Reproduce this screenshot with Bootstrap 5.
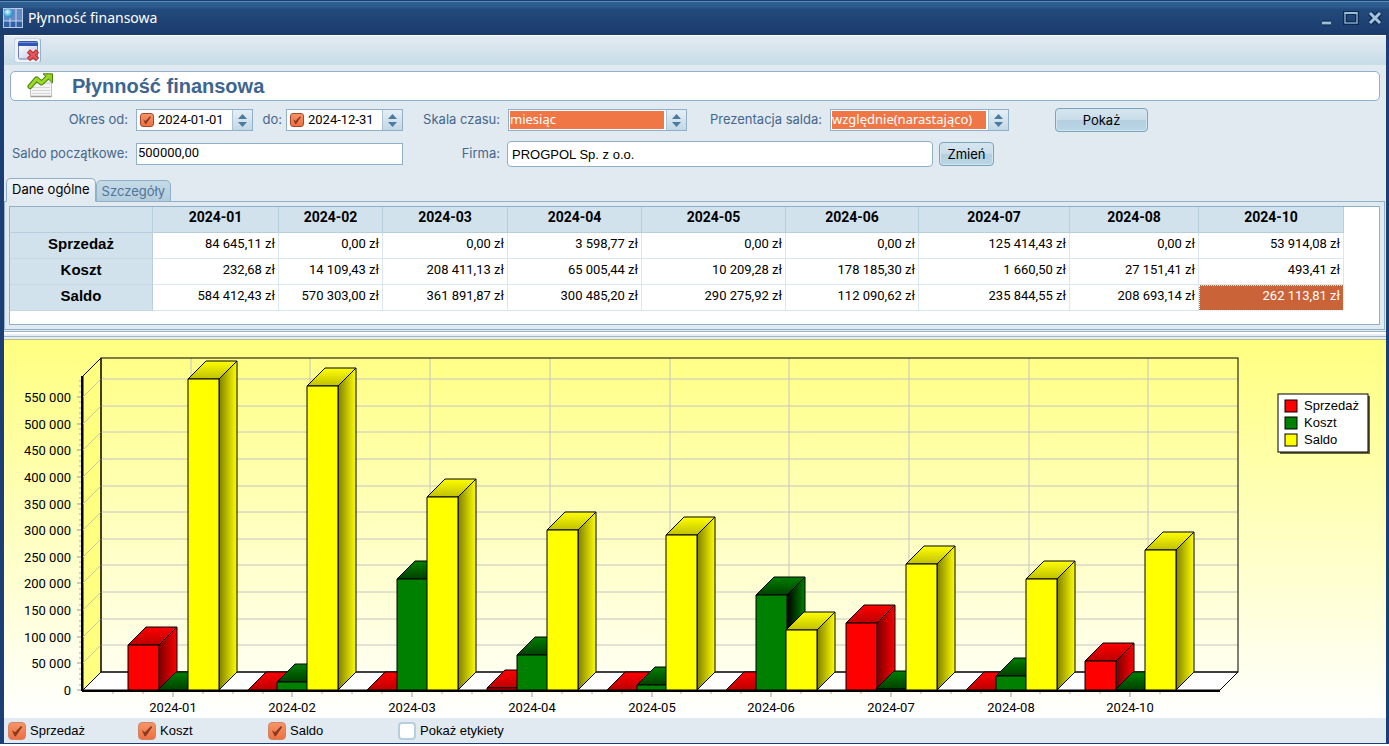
<!DOCTYPE html>
<html lang="pl">
<head>
<meta charset="utf-8">
<meta name="viewport" content="width=device-width, initial-scale=1">
<title>Płynność finansowa</title>
<link href="https://cdn.jsdelivr.net/npm/bootstrap@5.3.0/dist/css/bootstrap.min.css" rel="stylesheet">
<style>
  :root { --edge:#8fb0c6; --panel:#e1e9f1; --head:#d2e2ec; --label:#44678d; --navy:#1b3e74; }
  body { font-family:"Liberation Sans",Arial,sans-serif; font-size:14px; line-height:20px; color:#000; background:#fff; }
  .app-window { background:var(--panel); border:solid var(--navy); border-width:0 3px 1px 4px; }
  .title-strip { height:35px; margin:0 -3px 0 -4px; padding:0 6px 0 3px; background:linear-gradient(#16406f 0,#16406f 1px,#5b8cb5 1px,#5b8cb5 2px,#2f6193 2px,#2b5788 8px,#234a7c 9px,#1a3a6c 35px); }
  .title-strip .caption { font:14px/20px "Noto Sans","Open Sans",sans-serif; color:#fff; margin-left:5px; }
  .win-btn { border:0; background:none; padding:0; line-height:0; }
  .tool-strip { height:30px; padding:2px 10px; border-top:1px solid #fff; background:linear-gradient(#e3ebf2,#c7dce7); }
  .tool-btn { width:27px; height:25px; border:1px solid #c3d6e2; border-right:1px solid #8fb4cb; border-radius:3px; background:#edf3f8; padding:0; line-height:0; }
  .page-head { height:30px; margin:6px 6px 7px 6px; padding:0 0 0 16px; background:#fff; border:1px solid var(--edge); border-radius:5px; }
  .page-head h1 { font-size:20px; line-height:28px; font-weight:700; color:#3d658f; margin:0 0 0 17px; }
  .filters { display:grid; grid-template-columns:132px 267px 105px 179px 143px 179px 1fr; row-gap:9px; align-items:center; }
  .filters .row-label { color:var(--label); font:13px/20px "Inter","Liberation Sans",sans-serif; text-align:right; padding:0 8px 2px 0; white-space:nowrap; }
  .combo { height:22px; background:#fff; border:1px solid var(--edge); }
  .combo input[type=text] { border:0; background:none; padding:0; font:13px/20px "Roboto",sans-serif; min-width:0; flex:1; color:#000; outline:0; }
  .combo select { appearance:none; border:0; border-radius:0; background:#f07646; color:#fff; margin:1px 2px 1px 1px; padding:0 0 2px; font:13px/16px "Noto Sans",sans-serif; flex:1; min-width:0; outline:0; }
  .spin { width:20px; border:0; border-left:1px solid #a9c3d4; padding:0; background:linear-gradient(#e6eef4,#c3d8e5); line-height:0; }
  .plain-input { border:1px solid var(--edge); border-radius:0; background:#fff; padding:0 0 3px 1px; height:22px; width:100%; font:13px/17px "Roboto",sans-serif; outline:0; }
  .firm-input { border:1px solid var(--edge); border-radius:4px; padding:0 4px; height:26px; width:426px; margin-left:-1px; font:13px/20px "Liberation Sans",sans-serif; outline:0; }
  .push { border:1px solid #7ba3be; border-radius:4px; background:linear-gradient(#d6e6ef 0,#c9dde9 48%,#b4cfdf 52%,#bad5e4 100%); box-shadow:inset 0 0 0 1px #d3e5ef; padding:0; height:24px; font:13px/20px "Inter","Liberation Sans",sans-serif; color:#000; }
  .push-show { width:93px; margin-left:46px; }
  .push-edit { width:55px; }
  .tick { appearance:none; flex:none; margin:0; border:1px solid #a9472a; border-radius:3px; background:#f5804f; }
  .tick-sm { width:14px; height:14px; margin:0 4px 0 3px; }
  .tick-lg { width:18px; height:18px; border-color:#cf8468; border-radius:4px; }
  .tick:checked { background:url("data:image/svg+xml,%3Csvg xmlns='http://www.w3.org/2000/svg' viewBox='0 0 14 14'%3E%3Cpath d='M2.6 6.2L5.2 8.2 10.5 2.6 11.6 3.4 6 11.6 4.8 11.6z' fill='%238a3a22'/%3E%3C/svg%3E") center/100% no-repeat, linear-gradient(#f69468,#ee7040); }
  .tick:not(:checked) { background:#fff; border:2px solid #b6cfdf; }
  .tabs { border:0; height:24px; margin:11px 0 -1px 2px; align-items:flex-end; position:relative; }
  .tabs .nav-link { border:1px solid var(--edge); border-radius:5px 5px 0 0; margin:0; padding:0 5px; font:13px/20px "Inter","Liberation Sans",sans-serif; height:22px; color:#4f7495; background:linear-gradient(#c5dae7,#b3cddd); }
  .tabs .nav-link.active { height:24px; line-height:21px; color:#000; background:linear-gradient(#eef3f7,#e1e9f1); border-color:var(--edge); border-bottom-color:var(--panel); }
  .tab-body { border:1px solid var(--edge); padding:4px; margin-right:1px; }
  .grid-box { height:119px; background:#fff; border:1px solid var(--edge); overflow:hidden; }
  .cash { width:auto; table-layout:fixed; border-collapse:separate; border-spacing:0; margin:0; }
  .cash th, .cash td { height:26px; padding:0 3px 3px; line-height:18px; border:solid #dbe6ee; border-width:0 1px 1px 0; white-space:nowrap; }
  .cash th { background:var(--head); border-color:#b7cedd; font-weight:700; text-align:center; }
  .cash tbody th { font-size:15px; border-bottom-color:#c5d8e4; }
  .cash thead th { font:700 14px/18px "Roboto",sans-serif; padding-bottom:5px; }
  .cash td { font:13px/18px "Roboto",sans-serif; text-align:right; }
  .cash td.picked { background:#ca6338; color:#fff; outline:1px dotted #fff; outline-offset:-1px; }
  .splitter { height:10px; background:linear-gradient(#e1e9f1 0 1px,#9db8cb 1px 2px,#fff 2px 4px,#e6edf4 4px 6px,#9db8cb 6px 7px,#e6edf4 7px 9px,#b9bf8c 9px); }
  .chart { background:linear-gradient(#ffff80,#fff); height:378px; }
  .chart svg { display:block; }
  .chart text { font-family:"Roboto",sans-serif; font-size:13px; fill:#000; }
  .chart .legend-text { font-family:"Liberation Sans",Arial,sans-serif; }
  .series-bar { height:25px; padding-top:1px; }
  .series-bar label { width:130px; padding-left:4px; gap:4px; font:13px/20px "Liberation Sans",sans-serif; white-space:nowrap; }
</style>
</head>
<body>
<div class="app-window">
  <header class="title-strip d-flex align-items-center">
    <svg width="20" height="20" viewBox="0 0 20 20" class="flex-shrink-0"><defs><radialGradient id="orb" cx=".4" cy=".35"><stop offset="0" stop-color="#e8fbff"/><stop offset=".5" stop-color="#7ccbe8"/><stop offset="1" stop-color="#3c8fc4"/></radialGradient></defs><rect x=".5" y=".5" width="19" height="19" fill="#315fa8" stroke="#b9cdea"/><path d="M1 1h18v12H1z" fill="#8aa6d6" opacity=".6"/><path d="M7 1v18M13 1v18M1 13h18" stroke="#c5d6ef"/><circle cx="5.5" cy="5.5" r="5" fill="url(#orb)"/></svg>
    <span class="caption me-auto">Płynność finansowa</span>
    <button class="win-btn" aria-label="Minimalizuj"><svg width="24" height="18"><path d="M5 14h9" stroke="#0e2850" stroke-width="5"/><path d="M5 14h9" stroke="#9dbfd6" stroke-width="2.8"/></svg></button>
    <button class="win-btn" aria-label="Maksymalizuj"><svg width="24" height="18"><rect x="4" y="4" width="12" height="10" fill="none" stroke="#0e2850" stroke-width="4"/><rect x="4" y="4" width="12" height="10" fill="none" stroke="#7fa8c4" stroke-width="1.5"/><path d="M3.500 4h13" stroke="#9dbfd6" stroke-width="2"/></svg></button>
    <button class="win-btn" aria-label="Zamknij"><svg width="18" height="18"><path d="M5 4l10 10M15 4L5 14" stroke="#0e2850" stroke-width="5.500"/><path d="M5 4l10 10M15 4L5 14" stroke="#a3c6dc" stroke-width="3"/></svg></button>
  </header>

  <div class="tool-strip">
    <button class="tool-btn" aria-label="Zamknij okno"><svg width="22" height="22" viewBox="0 0 22 22"><defs><linearGradient id="wb" x2="1" y2="1"><stop offset="0" stop-color="#fff"/><stop offset="1" stop-color="#c3cbe4"/></linearGradient></defs><rect x="1.500" y="2.500" width="19" height="16.500" rx="1.500" fill="url(#wb)" stroke="#6f7fae"/><path d="M1 6V3q0-2 2-2h16q2 0 2 2v3z" fill="#3454b4"/><path d="M2 2.500h18" stroke="#6f8ce0"/><path d="M11.500 11l9 8.500M20.500 11l-9 8.500" stroke="#b5282c" stroke-width="4.600"/><path d="M12 11.500l8 7.500M20 11.500l-8 7.500" stroke="#e4575a" stroke-width="2.800"/></svg></button>
  </div>

  <div class="page-head d-flex align-items-center">
    <svg width="28" height="26" viewBox="0 0 28 26" class="flex-shrink-0"><path d="M3.500 10h21v13.500h-21z" fill="#f4f4f4" stroke="#c2c2c2"/><path d="M4 23.500h20.500" stroke="#9b9b9b" stroke-width="1.500"/><path d="M5 14.500h18M5 17.500h18M5 20.500h18" stroke="#d6d6d6"/><path d="M3 13.500L9.500 6l5 4L21 4" fill="none" stroke="#4b8311" stroke-width="5" stroke-linejoin="round" stroke-linecap="round"/><path d="M16 .8h9.500V10z" fill="#8fcc1e" stroke="#4b8311" stroke-linejoin="round"/><path d="M3 13.500L9.500 6l5 4L22 3" fill="none" stroke="#9bd926" stroke-width="3" stroke-linejoin="round" stroke-linecap="round"/></svg>
    <h1>Płynność finansowa</h1>
  </div>

  <form class="filters" onsubmit="return false">
    <label class="row-label" for="dFrom">Okres od:</label>
    <div class="d-flex align-items-center justify-content-between">
      <div class="combo d-flex" style="width:117px">
        <input class="tick tick-sm align-self-center" type="checkbox" checked aria-label="Od aktywne"><input id="dFrom" type="text" value="2024-01-01"><button class="spin" type="button" aria-label="Zmień datę od"><svg width="9" height="13"><path d="M0 5l4.500-5L9 5zM0 8h9l-4.500 5z" fill="#4c7ba2"/></svg></button>
      </div>
      <label for="dTo" class="row-label pe-0 ms-auto me-1">do:</label>
      <div class="combo d-flex" style="width:117px">
        <input class="tick tick-sm align-self-center" type="checkbox" checked aria-label="Do aktywne"><input id="dTo" type="text" value="2024-12-31"><button class="spin" type="button" aria-label="Zmień datę do"><svg width="9" height="13"><path d="M0 5l4.500-5L9 5zM0 8h9l-4.500 5z" fill="#4c7ba2"/></svg></button>
      </div>
    </div>
    <label class="row-label" for="scale">Skala czasu:</label>
    <div class="combo d-flex"><select id="scale"><option>miesiąc</option></select><button class="spin" type="button" aria-label="Zmień skalę"><svg width="9" height="13"><path d="M0 5l4.500-5L9 5zM0 8h9l-4.500 5z" fill="#4c7ba2"/></svg></button></div>
    <label class="row-label" for="mode">Prezentacja salda:</label>
    <div class="combo d-flex"><select id="mode"><option>względnie(narastająco)</option></select><button class="spin" type="button" aria-label="Zmień prezentację"><svg width="9" height="13"><path d="M0 5l4.500-5L9 5zM0 8h9l-4.500 5z" fill="#4c7ba2"/></svg></button></div>
    <div><button class="push push-show" type="button">Pokaż</button></div>

    <label class="row-label" for="start">Saldo początkowe:</label>
    <input class="plain-input" id="start" type="text" value="500000,00">
    <label class="row-label" for="firm">Firma:</label>
    <div class="d-flex align-items-center" style="grid-column:span 4;gap:6px">
      <input class="firm-input" id="firm" type="text" value="PROGPOL Sp. z o.o."><button class="push push-edit" type="button">Zmień</button>
    </div>
  </form>

  <nav class="tabs nav nav-tabs">
    <a class="nav-link active" href="#ogolne">Dane ogólne</a>
    <a class="nav-link" href="#szczegoly">Szczegóły</a>
  </nav>
  <section class="tab-body" id="ogolne">
    <div class="grid-box">
      <table class="cash">
        <colgroup><col style="width:143px"><col style="width:126px"><col style="width:104px"><col style="width:125px"><col style="width:134px"><col style="width:144px"><col style="width:133px"><col style="width:151px"><col style="width:129px"><col style="width:145px"></colgroup>
        <thead><tr><th></th><th>2024-01</th><th>2024-02</th><th>2024-03</th><th>2024-04</th><th>2024-05</th><th>2024-06</th><th>2024-07</th><th>2024-08</th><th>2024-10</th></tr></thead>
        <tbody>
          <tr><th>Sprzedaż</th><td>84 645,11 zł</td><td>0,00 zł</td><td>0,00 zł</td><td>3 598,77 zł</td><td>0,00 zł</td><td>0,00 zł</td><td>125 414,43 zł</td><td>0,00 zł</td><td>53 914,08 zł</td></tr>
          <tr><th>Koszt</th><td>232,68 zł</td><td>14 109,43 zł</td><td>208 411,13 zł</td><td>65 005,44 zł</td><td>10 209,28 zł</td><td>178 185,30 zł</td><td>1 660,50 zł</td><td>27 151,41 zł</td><td>493,41 zł</td></tr>
          <tr><th>Saldo</th><td>584 412,43 zł</td><td>570 303,00 zł</td><td>361 891,87 zł</td><td>300 485,20 zł</td><td>290 275,92 zł</td><td>112 090,62 zł</td><td>235 844,55 zł</td><td>208 693,14 zł</td><td class="picked">262 113,81 zł</td></tr>
        </tbody>
      </table>
    </div>
  </section>
  <div class="splitter"></div>
  <div class="chart" id="chart"></div>
  <footer class="series-bar d-flex align-items-center">
    <label class="d-flex align-items-center"><input class="tick tick-lg" type="checkbox" checked>Sprzedaż</label>
    <label class="d-flex align-items-center"><input class="tick tick-lg" type="checkbox" checked>Koszt</label>
    <label class="d-flex align-items-center"><input class="tick tick-lg" type="checkbox" checked>Saldo</label>
    <label class="d-flex align-items-center"><input class="tick tick-lg" type="checkbox">Pokaż etykiety</label>
  </footer>
</div>
<script src="https://cdn.jsdelivr.net/npm/bootstrap@5.3.0/dist/js/bootstrap.bundle.min.js"></script>
<script>
  // Monthly values: [month, sales, cost, balance]
  const months = [
    ['2024-01', 84645, 233, 584412], ['2024-02', 0, 14109, 570303], ['2024-03', 0, 208411, 361892],
    ['2024-04', 3599, 65005, 300485], ['2024-05', 0, 10209, 290276], ['2024-06', 0, 178185, 112091],
    ['2024-07', 125414, 1661, 235845], ['2024-08', 0, 27151, 208693], ['2024-10', 53914, 493, 262114]];
  // Face, dark end of the side shade, dark end of the top shade
  const paint = [['#ff0000', '#7a0000', '#bc0000'], ['#008000', '#000000', '#004000'], ['#ffff00', '#808000', '#c0c000']];
  const names = ['Sprzedaż', 'Koszt', 'Saldo'];

  function draw() {
    const host = document.getElementById('chart'), W = host.clientWidth, H = 378;
    const L = 79, R = W - 166, base = 350, top = 36, d = 18, perUnit = 293 / 550000;
    const step = (R - L) / 9.5, y = v => Math.round(base - v * perUnit);
    const line = (x1, y1, x2, y2, s, w) => `<line x1="${x1}" y1="${y1}" x2="${x2}" y2="${y2}" stroke="${s}" stroke-width="${w || 1}"/>`;
    const poly = (pts, f) => `<polygon points="${pts}" fill="${f}" stroke="#000" stroke-width="1" stroke-linejoin="round"/>`;
    let s = '<defs>';
    paint.forEach((p, i) => s += `<linearGradient id="sd${i}"><stop offset="0" stop-color="${p[1]}"/><stop offset="1" stop-color="${p[0]}"/></linearGradient><linearGradient id="tp${i}" x2="0" y2="1"><stop offset="0" stop-color="${p[0]}"/><stop offset="1" stop-color="${p[2]}"/></linearGradient>`);
    s += '</defs>';
    s += poly([L, base, L + d, base - d, R + d, base - d, R, base], '#fff');
    s += poly([L, top, L + d, top - d, L + d, base - d, L, base], '#ffff80');
    for (let v = 50000; v <= 550000; v += 50000)
      s += line(L, y(v), L + d, y(v) - d, '#c8c8a8') + line(L + d, y(v) - d, R + d, y(v) - d, '#c4c4c4', 1);
    months.forEach((m, i) => { const c = Math.round(L + step * (i + .75)) + d; s += line(c, top - d, c, base - d, '#c4c4c4'); });
    s += `<rect x="${L + d}" y="${top - d}" width="${R - L}" height="${base - top}" fill="none" stroke="#000"/>`;
    months.forEach((m, i) => {
      const c = L + step * (i + .75);
      for (let k = 0; k < 3; k++) {
        const a = Math.round(c + (k - 1.5) * step / 4), b = a + 31, t = y(m[k + 1]);
        if (t < base) s += poly([b, t, b + d, t - d, b + d, base - d, b, base], `url(#sd${k})`);
        s += poly([a, t, a + d, t - d, b + d, t - d, b, t], `url(#tp${k})`);
        if (t < base) s += poly([a, t, b, t, b, base, a, base], paint[k][0]);
      }
    });
    for (let v = 0; v <= 580000; v += 10000)
      s += v % 50000 ? line(L - 4, y(v), L - 1, y(v), '#aaa') : line(L - 6, y(v), L - 1, y(v), '#999');
    for (let v = 0; v <= 550000; v += 50000)
      s += `<text x="${L - 12}" y="${y(v) + 5}" text-anchor="end">${String(v).replace(/000$/, ' 000')}</text>`;
    for (let q = 1; q < 37; q++) { const x = Math.round(L + step * q / 4), big = q % 4 === 3; s += line(x, base + 1, x, base + (big ? 7 : 4), big ? '#999' : '#aaa'); }
    months.forEach((m, i) => s += `<text x="${Math.round(L + step * (i + .75))}" y="${base + 22}" text-anchor="middle">${m[0]}</text>`);
    s += line(L - 1, top, L - 1, base + 1, '#000', 2) + line(L - 1, base + 1, R, base + 1, '#000', 2);
    const lx = W - 108, ly = 54;
    s += `<rect x="${lx + 2}" y="${ly + 2}" width="90" height="58" fill="#66663c"/><rect x="${lx}" y="${ly}" width="90" height="58" fill="#fff" stroke="#000"/>`;
    names.forEach((n, i) => s += `<rect x="${lx + 7}" y="${ly + 6 + 17 * i}" width="12" height="12" fill="${paint[i][0]}" stroke="#000"/><text class="legend-text" x="${lx + 26}" y="${ly + 16 + 17 * i}">${n}</text>`);
    host.innerHTML = `<svg width="${W}" height="${H}" role="img" aria-label="Płynność finansowa">${s}</svg>`;
  }
  draw();
  addEventListener('resize', draw);
</script>
</body>
</html>
